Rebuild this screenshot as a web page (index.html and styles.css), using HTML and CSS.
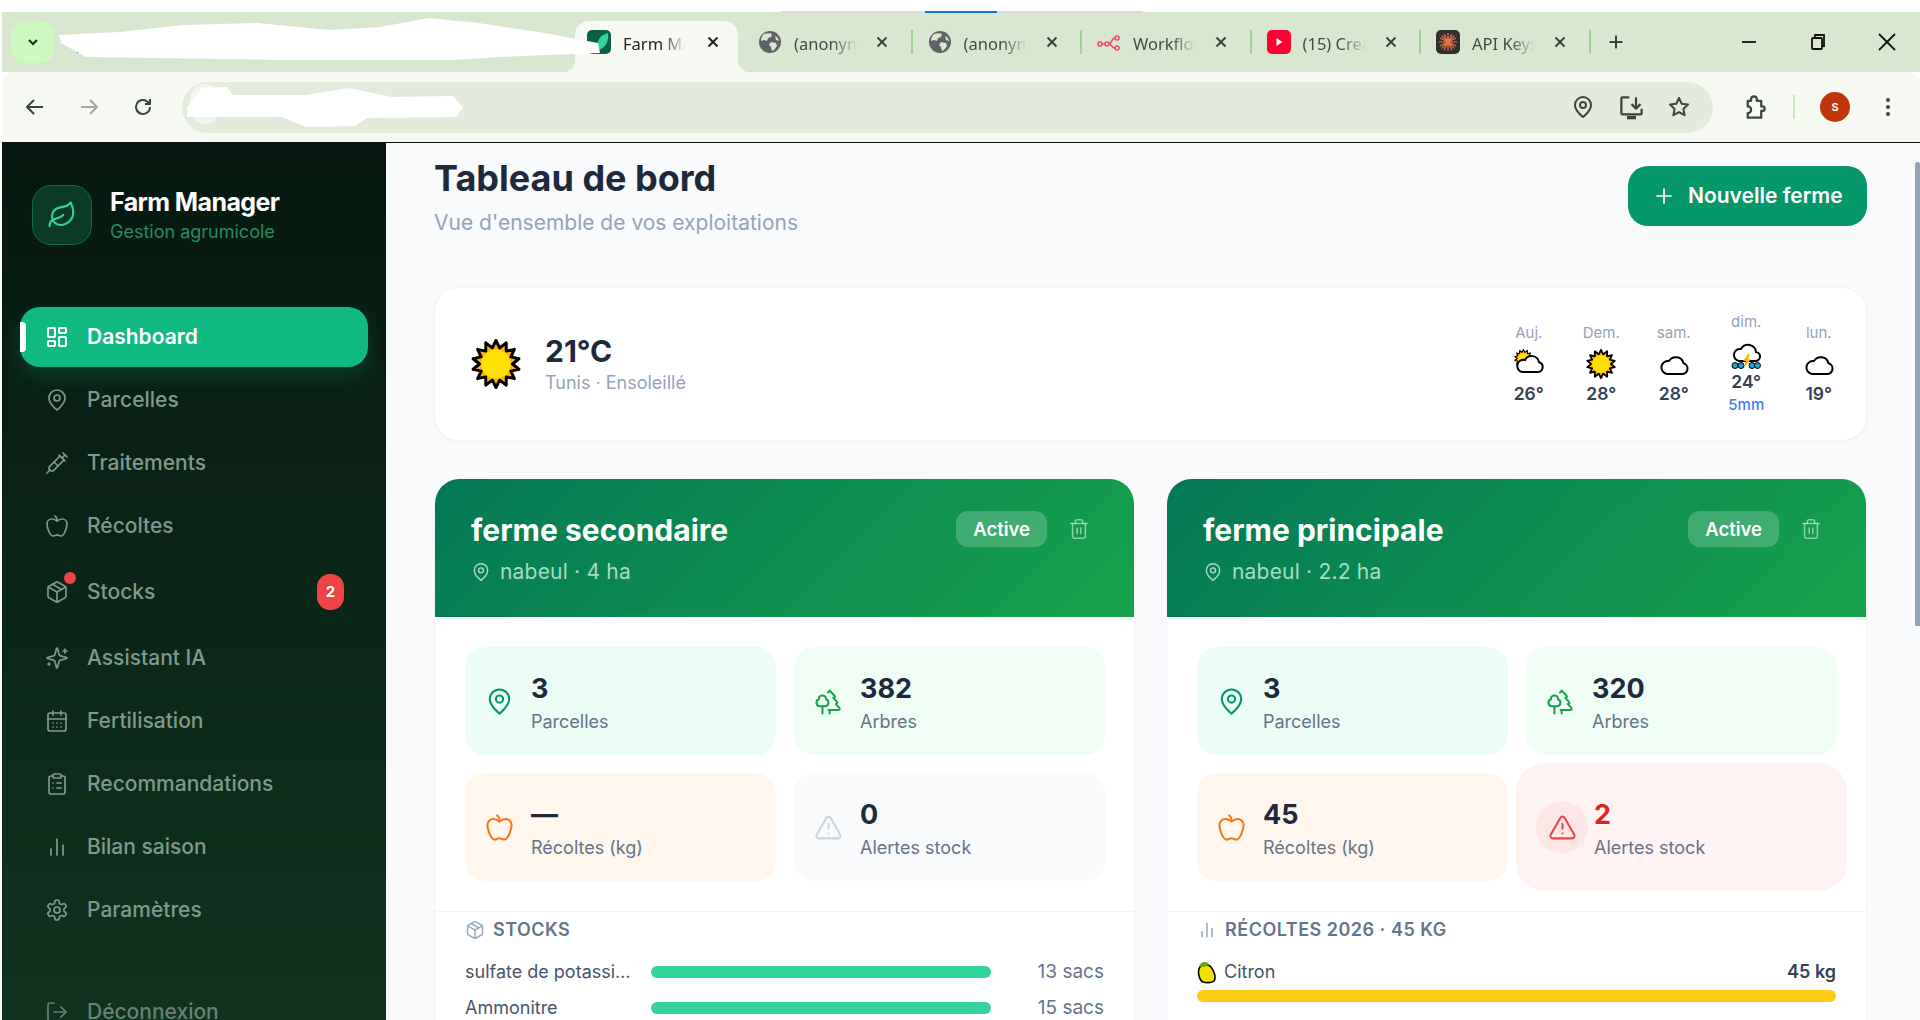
FILE: index.html
```html
<!DOCTYPE html>
<html lang="fr">
<head>
  <meta charset="UTF-8">
  <meta name="viewport" content="width=device-width, initial-scale=1.0">
  <title>Farm Manager</title>
  <link rel="stylesheet" href="styles.css">
</head>
<body>

  <!-- shared icons -->
  <svg class="defs" width="0" height="0">
    <symbol id="i-dashboard" viewBox="0 0 24 24"><rect x="3" y="3" width="7" height="9" rx="1"/><rect x="14" y="3" width="7" height="5" rx="1"/><rect x="14" y="12" width="7" height="9" rx="1"/><rect x="3" y="16" width="7" height="5" rx="1"/></symbol>
    <symbol id="i-pin" viewBox="0 0 24 24"><path d="M20 10c0 6-8 12-8 12s-8-6-8-12a8 8 0 0 1 16 0Z"/><circle cx="12" cy="10" r="3"/></symbol>
    <symbol id="i-syringe" viewBox="0 0 24 24"><path d="m18 2 4 4"/><path d="m17 7 3-3"/><path d="M19 9 8.7 19.3c-1 1-2.5 1-3.4 0l-.6-.6c-1-1-1-2.5 0-3.4L15 5"/><path d="m9 11 4 4"/><path d="m5 19-3 3"/><path d="m14 4 6 6"/></symbol>
    <symbol id="i-apple" viewBox="0 0 24 24"><path d="M12 20.94c1.5 0 2.75 1.06 4 1.06 3 0 6-8 6-12.22A4.91 4.91 0 0 0 17 5c-2.22 0-4 1.44-5 2-1-.56-2.78-2-5-2a4.9 4.9 0 0 0-5 4.78C2 14 5 22 8 22c1.25 0 2.5-1.06 4-1.06Z"/><path d="M10 2c1 .5 2 2 2 5"/></symbol>
    <symbol id="i-package" viewBox="0 0 24 24"><path d="m7.5 4.27 9 5.15"/><path d="M21 8a2 2 0 0 0-1-1.73l-7-4a2 2 0 0 0-2 0l-7 4A2 2 0 0 0 3 8v8a2 2 0 0 0 1 1.73l7 4a2 2 0 0 0 2 0l7-4A2 2 0 0 0 21 16Z"/><path d="m3.3 7 8.7 5 8.7-5"/><path d="M12 22V12"/></symbol>
    <symbol id="i-sparkles" viewBox="0 0 24 24"><path d="M9.937 15.5A2 2 0 0 0 8.5 14.063l-6.135-1.582a.5.5 0 0 1 0-.962L8.5 9.936A2 2 0 0 0 9.937 8.5l1.582-6.135a.5.5 0 0 1 .963 0L14.063 8.5A2 2 0 0 0 15.5 9.937l6.135 1.581a.5.5 0 0 1 0 .964L15.5 14.063a2 2 0 0 0-1.437 1.437l-1.582 6.135a.5.5 0 0 1-.963 0z"/><path d="M20 3v4"/><path d="M22 5h-4"/><path d="M4 17v2"/><path d="M5 18H3"/></symbol>
    <symbol id="i-calendar" viewBox="0 0 24 24"><path d="M8 2v4"/><path d="M16 2v4"/><rect x="3" y="4" width="18" height="18" rx="2"/><path d="M3 10h18"/><path d="M8 14h.01"/><path d="M12 14h.01"/><path d="M16 14h.01"/><path d="M8 18h.01"/><path d="M12 18h.01"/><path d="M16 18h.01"/></symbol>
    <symbol id="i-clipboard" viewBox="0 0 24 24"><rect x="8" y="2" width="8" height="4" rx="1"/><path d="M16 4h2a2 2 0 0 1 2 2v14a2 2 0 0 1-2 2H6a2 2 0 0 1-2-2V6a2 2 0 0 1 2-2h2"/><path d="M12 11h4"/><path d="M12 16h4"/><path d="M8 11h.01"/><path d="M8 16h.01"/></symbol>
    <symbol id="i-bars" viewBox="0 0 24 24"><path d="M18 20V10"/><path d="M12 20V4"/><path d="M6 20v-6"/></symbol>
    <symbol id="i-settings" viewBox="0 0 24 24"><path d="M12.22 2h-.44a2 2 0 0 0-2 2v.18a2 2 0 0 1-1 1.73l-.43.25a2 2 0 0 1-2 0l-.15-.08a2 2 0 0 0-2.73.73l-.22.38a2 2 0 0 0 .73 2.73l.15.1a2 2 0 0 1 1 1.72v.51a2 2 0 0 1-1 1.74l-.15.09a2 2 0 0 0-.73 2.73l.22.38a2 2 0 0 0 2.73.73l.15-.08a2 2 0 0 1 2 0l.43.25a2 2 0 0 1 1 1.73V20a2 2 0 0 0 2 2h.44a2 2 0 0 0 2-2v-.18a2 2 0 0 1 1-1.73l.43-.25a2 2 0 0 1 2 0l.15.08a2 2 0 0 0 2.73-.73l.22-.39a2 2 0 0 0-.73-2.73l-.15-.08a2 2 0 0 1-1-1.74v-.5a2 2 0 0 1 1-1.74l.15-.09a2 2 0 0 0 .73-2.73l-.22-.38a2 2 0 0 0-2.73-.73l-.15.08a2 2 0 0 1-2 0l-.43-.25a2 2 0 0 1-1-1.73V4a2 2 0 0 0-2-2z"/><circle cx="12" cy="12" r="3"/></symbol>
    <symbol id="i-logout" viewBox="0 0 24 24"><path d="M9 21H5a2 2 0 0 1-2-2V5a2 2 0 0 1 2-2h4"/><path d="m16 17 5-5-5-5"/><path d="M21 12H9"/></symbol>
    <symbol id="i-leaf" viewBox="0 0 24 24"><path d="M11 20A7 7 0 0 1 9.8 6.1C15.5 5 17 4.48 19 2c1 2 2 4.18 2 8 0 5.5-4.78 10-10 10Z"/><path d="M2 21c0-3 1.85-5.36 5.08-6C9.5 14.52 12 13 13 12"/></symbol>
    <symbol id="i-trees" viewBox="0 0 24 24"><path d="M10 10v.2A3 3 0 0 1 8.9 16H5a3 3 0 0 1-1-5.8V10a3 3 0 0 1 6 0Z"/><path d="M7 16v6"/><path d="M13 19v3"/><path d="M12 19h8.3a1 1 0 0 0 .7-1.7L18 14h.3a1 1 0 0 0 .7-1.7L16 9h.2a1 1 0 0 0 .8-1.7L13 3l-1.4 1.5"/></symbol>
    <symbol id="i-alert" viewBox="0 0 24 24"><path d="m21.73 18-8-14a2 2 0 0 0-3.48 0l-8 14A2 2 0 0 0 4 21h16a2 2 0 0 0 1.73-3"/><path d="M12 9v4"/><path d="M12 17h.01"/></symbol>
    <symbol id="i-trash" viewBox="0 0 24 24"><path d="M3 6h18"/><path d="M19 6v14c0 1-1 2-2 2H7c-1 0-2-1-2-2V6"/><path d="M8 6V4c0-1 1-2 2-2h4c1 0 2 1 2 2v2"/><path d="M10 11v6"/><path d="M14 11v6"/></symbol>
    <symbol id="i-plus" viewBox="0 0 24 24"><path d="M5 12h14"/><path d="M12 5v14"/></symbol>
    <symbol id="i-close" viewBox="0 0 24 24"><path d="M6 6l12 12"/><path d="M18 6 6 18"/></symbol>
    <symbol id="i-globe" viewBox="0 0 24 24"><circle cx="12" cy="12" r="11" fill="#5f6368"/><path d="M6 4c3-1 6-1 8 0l-1 3-3 1-1 3-3-1-3 1c0-3 1-5 3-7zM13 12l5 1 1 3-3 4-2 1-1-4-2-2zM17 6l3 2 1 3-3-1z" fill="#d9e7d0"/></symbol>
    <symbol id="w-sun" viewBox="0 0 50 50"><polygon points="25,1.5 28.67,8.91 35.2,3.83 35.29,12.1 43.37,10.35 39.87,17.84 47.91,19.77 41.5,25 47.91,30.23 39.87,32.16 43.37,39.65 35.29,37.9 35.2,46.17 28.67,41.09 25,48.5 21.33,41.09 14.8,46.17 14.71,37.9 6.63,39.65 10.13,32.16 2.09,30.23 8.5,25 2.09,19.77 10.13,17.84 6.63,10.35 14.71,12.1 14.8,3.83 21.33,8.91" fill="#ffb300" stroke="#000" stroke-width="3" stroke-linejoin="round"/><circle cx="25" cy="25" r="14.5" fill="#ffe000"/></symbol>
    <symbol id="w-cloud" viewBox="0 0 30 30"><path d="M8 25H23a5.5 5.5 0 0 0 1.5-10.8A8 8 0 0 0 10 12a6.5 6.5 0 0 0-2 13z" fill="#fff" stroke="#000" stroke-width="2" stroke-linejoin="round"/></symbol>
  </svg>

  <div class="window">

    <!-- Browser chrome -->
    <div class="tabbar">
      <div class="tab-search">
        <svg width="16" height="16" viewBox="0 0 24 24" fill="none" stroke="#1f2a1c" stroke-width="3"><path d="m6 9 6 6 6-6"/></svg>
      </div>
      <div class="tabs">
        <div class="tab active">
          <svg class="favicon" viewBox="0 0 24 24"><rect width="24" height="24" rx="5" fill="#0b5f47"/><path d="M12 20C8 10 14 5 21 3c1 8-2 14-9 17z" fill="#34d399"/></svg>
          <span class="tab-title">Farm Manager</span>
          <svg class="tab-close" viewBox="0 0 24 24"><use href="#i-close"/></svg>
        </div>
        <div class="tab">
          <svg class="favicon" viewBox="0 0 24 24"><use href="#i-globe"/></svg>
          <span class="tab-title">(anonymous)</span>
          <svg class="tab-close" viewBox="0 0 24 24"><use href="#i-close"/></svg>
        </div>
        <div class="tab">
          <svg class="favicon" viewBox="0 0 24 24"><use href="#i-globe"/></svg>
          <span class="tab-title">(anonymous)</span>
          <svg class="tab-close" viewBox="0 0 24 24"><use href="#i-close"/></svg>
        </div>
        <div class="tab">
          <svg class="favicon" viewBox="0 0 24 24" fill="none" stroke="#ea4b71" stroke-width="1.6"><circle cx="3" cy="14" r="2"/><circle cx="10" cy="14" r="2"/><circle cx="20" cy="8" r="2"/><circle cx="20" cy="18" r="2"/><path d="M5 14h3M12 14c3 0 2-6 6-6M12 14c3 0 2 4 6 4"/></svg>
          <span class="tab-title">Workflow</span>
          <svg class="tab-close" viewBox="0 0 24 24"><use href="#i-close"/></svg>
        </div>
        <div class="tab">
          <svg class="favicon" viewBox="0 0 24 24"><rect width="24" height="24" rx="5" fill="#ff0033"/><path d="M9.5 8v8l6-4z" fill="#fff"/></svg>
          <span class="tab-title">(15) Creator</span>
          <svg class="tab-close" viewBox="0 0 24 24"><use href="#i-close"/></svg>
        </div>
        <div class="tab">
          <svg class="favicon" viewBox="0 0 24 24"><rect width="24" height="24" rx="5" fill="#33312f"/><path d="M12 3v18M3 12h18M5.6 5.6l12.8 12.8M18.4 5.6 5.6 18.4M8 4l8 16M16 4 8 20M4 8l16 8M20 8 4 16" stroke="#e8734a" stroke-width="1.2"/></svg>
          <span class="tab-title">API Keys</span>
          <svg class="tab-close" viewBox="0 0 24 24"><use href="#i-close"/></svg>
        </div>
      </div>
      <svg class="new-tab" viewBox="0 0 24 24"><use href="#i-plus"/></svg>
      <div class="win-controls">
        <svg viewBox="0 0 24 24"><path d="M5 12h14"/></svg>
        <svg viewBox="0 0 24 24"><rect x="6" y="8" width="10" height="11" rx="1"/><path d="M9 8V5h9v11h-2"/></svg>
        <svg viewBox="0 0 24 24"><path d="M4 4l16 16"/><path d="M20 4 4 20"/></svg>
      </div>
    </div>

    <div class="toolbar">
      <svg class="tool" viewBox="0 0 24 24"><path d="M20 12H5"/><path d="m11 5-7 7 7 7"/></svg>
      <svg class="tool tool-off" viewBox="0 0 24 24"><path d="M4 12h15"/><path d="m13 5 7 7-7 7"/></svg>
      <svg class="tool" viewBox="0 0 24 24"><path d="M19 12a7 7 0 1 1-2.2-5.1L19 9"/><path d="M19 4v5h-5"/></svg>
      <div class="omnibox">
        <svg class="tool" viewBox="0 0 24 24"><use href="#i-pin"/></svg>
        <svg class="tool tool-install" viewBox="0 0 24 24"><path d="M10 3H4a1 1 0 0 0-1 1v13a1 1 0 0 0 1 1h16a1 1 0 0 0 1-1v-4"/><path d="M16 3v9"/><path d="m12 9 4 4 4-4"/><path d="M8 21h8" stroke-width="3"/></svg>
        <svg class="tool" viewBox="0 0 24 24"><path d="m12 3 2.7 5.8 6.3.8-4.6 4.3 1.2 6.3-5.6-3.1-5.6 3.1 1.2-6.3L3 9.6l6.3-.8z"/></svg>
      </div>
      <svg class="tool tool-ext" viewBox="0 0 24 24"><path d="M6 6h3V4.5a2.5 2.5 0 0 1 5 0V6h4v5h1a2 2 0 0 1 0 4h-1v6H6v-4a2.5 2.5 0 0 0 0-6z"/></svg>
      <span class="tool-sep"></span>
      <span class="avatar">S</span>
      <svg class="tool-dots" viewBox="0 0 24 24"><circle cx="12" cy="5" r="2"/><circle cx="12" cy="12" r="2"/><circle cx="12" cy="19" r="2"/></svg>
    </div>

    <!-- App -->
    <div class="app">
      <aside class="sidebar">
        <div class="brand">
          <div class="brand-logo"><svg class="icon"><use href="#i-leaf"/></svg></div>
          <div>
            <div class="brand-name">Farm Manager</div>
            <div class="brand-sub">Gestion agrumicole</div>
          </div>
        </div>

        <nav class="nav">
          <a class="nav-item active" href="#"><svg class="icon"><use href="#i-dashboard"/></svg>Dashboard</a>
          <a class="nav-item" href="#"><svg class="icon"><use href="#i-pin"/></svg>Parcelles</a>
          <a class="nav-item" href="#"><svg class="icon"><use href="#i-syringe"/></svg>Traitements</a>
          <a class="nav-item" href="#"><svg class="icon"><use href="#i-apple"/></svg>Récoltes</a>
          <a class="nav-item nav-stocks" href="#"><svg class="icon"><use href="#i-package"/></svg><span class="nav-dot"></span>Stocks<span class="nav-badge">2</span></a>
          <a class="nav-item" href="#"><svg class="icon"><use href="#i-sparkles"/></svg>Assistant IA</a>
          <a class="nav-item" href="#"><svg class="icon"><use href="#i-calendar"/></svg>Fertilisation</a>
          <a class="nav-item" href="#"><svg class="icon"><use href="#i-clipboard"/></svg>Recommandations</a>
          <a class="nav-item" href="#"><svg class="icon"><use href="#i-bars"/></svg>Bilan saison</a>
          <a class="nav-item" href="#"><svg class="icon"><use href="#i-settings"/></svg>Paramètres</a>
          <a class="nav-item nav-logout" href="#"><svg class="icon"><use href="#i-logout"/></svg>Déconnexion</a>
        </nav>
      </aside>

      <main class="main">
        <div class="page-head">
          <div>
            <h1>Tableau de bord</h1>
            <p>Vue d'ensemble de vos exploitations</p>
          </div>
          <button class="btn-new"><svg class="icon"><use href="#i-plus"/></svg>Nouvelle ferme</button>
        </div>

        <section class="weather">
          <svg class="weather-sun"><use href="#w-sun"/></svg>
          <div class="weather-now">
            <div class="weather-temp">21°C</div>
            <div class="weather-place">Tunis · Ensoleillé</div>
          </div>
          <div class="forecast">
            <div class="day">
              <span class="day-name">Auj.</span>
              <svg class="day-icon" viewBox="0 0 30 30">
                <use href="#w-sun" x="0" y="0" width="19" height="19"/>
                <path d="M8 23H24a5 5 0 0 0 1-9.8A7.5 7.5 0 0 0 11 11a6 6 0 0 0-3 12z" fill="#fff" stroke="#000" stroke-width="2"/>
              </svg>
              <span class="day-temp">26°</span>
            </div>
            <div class="day">
              <span class="day-name">Dem.</span>
              <svg class="day-icon"><use href="#w-sun"/></svg>
              <span class="day-temp">28°</span>
            </div>
            <div class="day">
              <span class="day-name">sam.</span>
              <svg class="day-icon"><use href="#w-cloud"/></svg>
              <span class="day-temp">28°</span>
            </div>
            <div class="day">
              <span class="day-name">dim.</span>
              <svg class="day-icon day-icon-short" viewBox="0 0 30 26">
                <path d="M8 18H24a4.5 4.5 0 0 0 1-9A8 8 0 0 0 10 6a6 6 0 0 0-2 12z" fill="#fff" stroke="#000" stroke-width="2"/>
                <circle cx="4" cy="22.5" r="3" fill="#1da1d8" stroke="#000"/>
                <circle cx="10" cy="22.5" r="3" fill="#1da1d8" stroke="#000"/>
                <circle cx="21" cy="22.5" r="3" fill="#1da1d8" stroke="#000"/>
                <circle cx="26.5" cy="22.5" r="3" fill="#1da1d8" stroke="#000"/>
                <path d="M17 11l-5 7h3l-2 7 7-9h-3l2-5z" fill="#ffb300"/>
              </svg>
              <span class="day-temp">24°</span>
              <span class="day-rain">5mm</span>
            </div>
            <div class="day">
              <span class="day-name">lun.</span>
              <svg class="day-icon"><use href="#w-cloud"/></svg>
              <span class="day-temp">19°</span>
            </div>
          </div>
        </section>

        <div class="farms">

          <article class="farm">
            <header class="farm-head">
              <div class="farm-info">
                <h2>ferme secondaire</h2>
                <div class="farm-loc"><svg class="icon"><use href="#i-pin"/></svg>nabeul · 4 ha</div>
              </div>
              <span class="chip">Active</span>
              <svg class="icon farm-trash"><use href="#i-trash"/></svg>
            </header>
            <div class="farm-body">
              <div class="stats">
                <div class="stat stat-green">
                  <div class="stat-icon c-emerald"><svg class="icon"><use href="#i-pin"/></svg></div>
                  <div class="stat-text"><div class="stat-value">3</div><div class="stat-label">Parcelles</div></div>
                </div>
                <div class="stat stat-lime">
                  <div class="stat-icon c-green"><svg class="icon"><use href="#i-trees"/></svg></div>
                  <div class="stat-text"><div class="stat-value">382</div><div class="stat-label">Arbres</div></div>
                </div>
                <div class="stat stat-orange">
                  <div class="stat-icon c-orange"><svg class="icon"><use href="#i-apple"/></svg></div>
                  <div class="stat-text"><div class="stat-value">—</div><div class="stat-label">Récoltes (kg)</div></div>
                </div>
                <div class="stat stat-grey">
                  <div class="stat-icon c-grey"><svg class="icon"><use href="#i-alert"/></svg></div>
                  <div class="stat-text"><div class="stat-value">0</div><div class="stat-label">Alertes stock</div></div>
                </div>
              </div>
            </div>
            <div class="farm-section">
              <div class="section-title"><svg class="icon"><use href="#i-package"/></svg>STOCKS</div>
              <div class="stock-row">
                <span class="stock-name">sulfate de potassium</span>
                <span class="bar"><span class="bar-fill"></span></span>
                <span class="stock-qty">13 sacs</span>
              </div>
              <div class="stock-row">
                <span class="stock-name">Ammonitre</span>
                <span class="bar"><span class="bar-fill"></span></span>
                <span class="stock-qty">15 sacs</span>
              </div>
            </div>
          </article>

          <article class="farm">
            <header class="farm-head">
              <div class="farm-info">
                <h2>ferme principale</h2>
                <div class="farm-loc"><svg class="icon"><use href="#i-pin"/></svg>nabeul · 2.2 ha</div>
              </div>
              <span class="chip">Active</span>
              <svg class="icon farm-trash"><use href="#i-trash"/></svg>
            </header>
            <div class="farm-body">
              <div class="stats">
                <div class="stat stat-green">
                  <div class="stat-icon c-emerald"><svg class="icon"><use href="#i-pin"/></svg></div>
                  <div class="stat-text"><div class="stat-value">3</div><div class="stat-label">Parcelles</div></div>
                </div>
                <div class="stat stat-lime">
                  <div class="stat-icon c-green"><svg class="icon"><use href="#i-trees"/></svg></div>
                  <div class="stat-text"><div class="stat-value">320</div><div class="stat-label">Arbres</div></div>
                </div>
                <div class="stat stat-orange">
                  <div class="stat-icon c-orange"><svg class="icon"><use href="#i-apple"/></svg></div>
                  <div class="stat-text"><div class="stat-value">45</div><div class="stat-label">Récoltes (kg)</div></div>
                </div>
                <div class="stat stat-alert">
                  <div class="stat-icon c-red"><svg class="icon"><use href="#i-alert"/></svg></div>
                  <div class="stat-text"><div class="stat-value">2</div><div class="stat-label">Alertes stock</div></div>
                </div>
              </div>
            </div>
            <div class="farm-section">
              <div class="section-title"><svg class="icon"><use href="#i-bars"/></svg>RÉCOLTES 2026 · 45 KG</div>
              <div class="harvest-row">
                <span class="harvest-name">
                  <svg class="lemon" viewBox="0 0 20 24"><path d="M3 7c3-3 9-3 11 0 4 5 5 11 3 14-2 2-8 2-11 1C2 20 0 11 3 7z" fill="#f5e000" stroke="#000" stroke-width="1.6"/><path d="M2 6c2-5 8-5 10-2-2 3-8 4-10 2z" fill="#6aa51e"/></svg>
                  Citron
                </span>
                <span class="harvest-qty">45 kg</span>
              </div>
              <span class="bar bar-harvest"><span class="bar-fill"></span></span>
            </div>
          </article>

        </div>

        <div class="scroll-thumb"></div>
      </main>
    </div>

    <!-- scribbled-out parts of the screenshot and the loading line -->
    <div class="load-line"></div>
    <svg class="scribble" width="620" height="135" viewBox="0 0 620 135">
      <rect x="190" y="84" width="30" height="40" rx="15" fill="#f1f5ec"/>
      <rect x="77" y="46" width="5" height="7" fill="#6a4fc9"/>
      <polygon points="59,35 120,32 184,25 257,23 330,30 380,27 429,18 478,23 545,33 598,43 600,53 520,56 453,60 288,60 86,57 61,43" fill="#fff"/>
      <polygon points="187,107 202,88 227,87 233,95 306,95 349,88 392,97 453,96 463,107 456,117 367,118 355,126 306,127 282,117 187,117" fill="#fff"/>
    </svg>

  </div>

</body>
</html>
```

FILE: styles.css
```css
* {
  margin: 0;
  padding: 0;
  box-sizing: border-box;
}

body {
  font-family: Inter, "Liberation Sans", sans-serif;
  background: white;
  height: 100vh;
  overflow: hidden;
}

.defs {
  position: absolute;
}

.icon {
  width: 24px;
  height: 24px;
  fill: none;
  stroke: currentColor;
  stroke-width: 1.7;
  stroke-linecap: round;
  stroke-linejoin: round;
  flex-shrink: 0;
}

.window {
  position: relative;
  height: 100%;
  padding: 12px 0 0 2px;
  display: flex;
  flex-direction: column;
}

/* browser chrome */

.tabbar {
  height: 60px;
  background: #d9e7d0;
  display: flex;
  align-items: flex-start;
  padding-top: 9px;
  padding-left: 9px;
  flex-shrink: 0;
}

.tab-search {
  width: 43px;
  height: 42px;
  border-radius: 14px;
  background: #cdfabe;
  display: flex;
  align-items: center;
  justify-content: center;
}

.tabs {
  display: flex;
  margin-left: 521px;
}

.tab {
  width: 169.5px;
  height: 42px;
  padding-left: 16px;
  display: flex;
  align-items: center;
  position: relative;
  font-family: "Noto Sans", sans-serif;
  font-size: 16.5px;
  color: #454a44;
}

.tab::after {
  content: "";
  position: absolute;
  right: -1px;
  top: 9px;
  height: 24px;
  width: 2px;
  background: #9dd28f;
}

.tab.active {
  width: 163px;
  margin-right: 4px;
  height: 51px;
  padding: 0 0 9px 12px;
  background: #f6f9f1;
  border-radius: 14px 14px 0 0;
  color: #20241f;
}

.tab.active::after {
  display: none;
}

.tab.active::before {
  content: "";
  position: absolute;
  left: -12px;
  bottom: 0;
  width: 12px;
  height: 12px;
  background: radial-gradient(circle at 0 0, transparent 12px, #f6f9f1 12.5px);
}

.tab.active + .tab::before {
  content: "";
  position: absolute;
  left: -4px;
  top: 39px;
  width: 12px;
  height: 12px;
  background: radial-gradient(circle at 100% 0, transparent 12px, #f6f9f1 12.5px);
}

.favicon {
  width: 24px;
  height: 24px;
  flex-shrink: 0;
}

.tab-title {
  width: 64px;
  margin-left: 12px;
  padding-top: 2px;
  white-space: nowrap;
  overflow: hidden;
  -webkit-mask-image: linear-gradient(90deg, #000 60%, transparent 98%);
  mask-image: linear-gradient(90deg, #000 60%, transparent 98%);
}

.tab-close {
  width: 18px;
  height: 18px;
  margin-left: 17px;
  fill: none;
  stroke: #20241f;
  stroke-width: 2.6;
}

.tab:not(.active) .tab-close {
  stroke: #3c4139;
  margin-left: 15px;
}

.new-tab {
  width: 22px;
  height: 22px;
  margin: 10px 0 0 15px;
  fill: none;
  stroke: #3c4139;
  stroke-width: 2.2;
}

.win-controls {
  display: flex;
  margin-left: auto;
  padding-top: 9px;
  padding-right: 21px;
  gap: 45px;
}

.win-controls svg {
  width: 24px;
  height: 24px;
  fill: none;
  stroke: #111;
  stroke-width: 1.8;
}

.toolbar {
  height: 71px;
  background: #f6f9f1;
  border-radius: 12px 12px 0 0;
  border-bottom: 1px solid #111;
  display: flex;
  align-items: center;
  padding: 0 17px 0 21px;
  flex-shrink: 0;
}

.tool {
  width: 24px;
  height: 24px;
  fill: none;
  stroke: #3c4539;
  stroke-width: 2;
  stroke-linejoin: round;
  flex-shrink: 0;
}

.toolbar > .tool {
  margin-right: 30px;
}

.toolbar > .tool-off {
  stroke: #a3a8a0;
}

.omnibox {
  margin-left: -3px;
  width: 1531px;
  height: 51px;
  border-radius: 26px;
  background: #e3ebdc;
  display: flex;
  align-items: center;
  justify-content: flex-end;
  gap: 22.5px;
  padding-right: 22px;
}

.tool-install {
  width: 27px;
  height: 27px;
}

.toolbar > .tool-ext {
  margin: 0 0 0 28px;
  width: 27px;
  height: 27px;
}

.tool-sep {
  width: 2px;
  height: 24px;
  margin-left: 25px;
  background: #c5ebb8;
}

.avatar {
  width: 30px;
  height: 30px;
  margin-left: 25px;
  border-radius: 50%;
  background: #bf360c;
  color: white;
  font-size: 11px;
  font-weight: 600;
  display: flex;
  align-items: center;
  justify-content: center;
}

.tool-dots {
  width: 24px;
  height: 24px;
  margin-left: 26px;
  fill: #3c4539;
}

/* app */

.app {
  flex: 1;
  display: flex;
  min-height: 0;
}

.sidebar {
  width: 384px;
  flex-shrink: 0;
  padding: 42px 18px 0;
  background: linear-gradient(180deg, #06180f 0%, #0f331f 100%);
  overflow: hidden;
}

.brand {
  display: flex;
  align-items: center;
  gap: 18px;
  padding-left: 12px;
}

.brand-logo {
  width: 60px;
  height: 60px;
  border-radius: 19px;
  background: #0b3a26;
  border: 1px solid #136b45;
  color: #34d399;
  display: flex;
  align-items: center;
  justify-content: center;
}

.brand-logo .icon {
  width: 30px;
  height: 30px;
}

.brand-name {
  color: white;
  font-size: 25px;
  font-weight: 700;
  letter-spacing: -0.6px;
  line-height: 32px;
}

.brand-sub {
  color: #2d8a5f;
  font-size: 18px;
  line-height: 26px;
  padding-top: 1px;
}

.nav {
  margin-top: 62px;
  display: flex;
  flex-direction: column;
  gap: 3px;
}

.nav-item {
  position: relative;
  height: 60px;
  display: flex;
  align-items: center;
  gap: 18px;
  padding: 0 24px 1px 25px;
  border-radius: 20px;
  font-size: 21px;
  font-weight: 500;
  color: #7f9a8c;
  text-decoration: none;
  flex-shrink: 0;
}

.nav-item.active {
  background: #10b981;
  color: white;
  font-weight: 600;
  box-shadow: 0 10px 25px rgba(16, 185, 129, 0.2);
}

.nav-item.active .icon {
  stroke-width: 2;
}

.nav-item.active::before {
  content: "";
  position: absolute;
  left: 0;
  top: 15px;
  width: 6px;
  height: 30px;
  background: white;
  border-radius: 0 4px 4px 0;
}

.nav-stocks {
  height: 66px;
}

.nav-dot {
  position: absolute;
  left: 44px;
  top: 13px;
  width: 12px;
  height: 12px;
  border-radius: 50%;
  background: #ef4444;
}

.nav-badge {
  margin-left: auto;
  width: 27px;
  height: 36px;
  border-radius: 13px;
  background: #ef4444;
  color: white;
  font-size: 15px;
  font-weight: 700;
  display: flex;
  align-items: center;
  justify-content: center;
}

.nav-logout {
  margin-top: 39px;
  color: #678274;
}

/* main */

.main {
  position: relative;
  flex: 1;
  min-width: 0;
  background: #f8fafc;
  padding: 13px 53px 0 48px;
  overflow: hidden;
}

.scroll-thumb {
  position: absolute;
  top: 19px;
  right: 0;
  width: 5px;
  height: 464px;
  background: #94a3b8;
  border-radius: 3px 3px 0 0;
}

.page-head {
  display: flex;
  justify-content: space-between;
  align-items: flex-start;
  margin-bottom: 50px;
}

.page-head h1 {
  font-size: 36px;
  font-weight: 700;
  line-height: 44px;
  color: #1e293b;
  margin-bottom: 9px;
}

.page-head p {
  font-size: 21px;
  line-height: 28px;
  color: #94a3b8;
}

.btn-new {
  width: 239px;
  height: 60px;
  margin-top: 10px;
  border: none;
  border-radius: 20px;
  background: #059669;
  color: white;
  font-family: inherit;
  font-size: 21px;
  font-weight: 600;
  display: flex;
  align-items: center;
  gap: 12px;
  padding: 0 0 1px 24px;
}

.weather {
  height: 154px;
  background: white;
  border: 1px solid #f1f5f9;
  border-radius: 25px;
  box-shadow: 0 1px 3px rgba(15, 23, 42, 0.04);
  display: flex;
  align-items: center;
  padding: 0 11px 0 36px;
  margin-bottom: 38px;
}

.weather-sun {
  width: 50px;
  height: 50px;
  flex-shrink: 0;
}

.weather-now {
  margin-left: 24px;
  padding-bottom: 1px;
}

.weather-temp {
  font-size: 30px;
  font-weight: 700;
  line-height: 38px;
  color: #1e293b;
}

.weather-place {
  font-size: 18px;
  line-height: 26px;
  color: #94a3b8;
}

.forecast {
  margin-left: auto;
  display: flex;
  align-items: center;
}

.day {
  width: 72.5px;
  display: flex;
  flex-direction: column;
  align-items: center;
}

.day-name {
  font-size: 15px;
  line-height: 22px;
  color: #94a3b8;
}

.day-icon {
  width: 30px;
  height: 30px;
  margin: 5px 0 2px;
}

.day-icon-short {
  height: 26px;
  margin: 10px 0 0;
}

.day-temp {
  font-size: 17.5px;
  font-weight: 600;
  line-height: 26px;
  color: #334155;
}

.day-rain {
  font-size: 15px;
  font-weight: 500;
  line-height: 20px;
  padding-bottom: 2px;
  color: #3b82f6;
}

.farms {
  display: grid;
  grid-template-columns: 1fr 1fr;
  gap: 31px;
}

.farm {
  background: white;
  border: 1px solid #f1f5f9;
  border-top: none;
  border-radius: 25px;
  overflow: hidden;
}

.farm-head {
  height: 138px;
  background: linear-gradient(135deg, #047857 0%, #16a34a 100%);
  display: flex;
  align-items: flex-start;
  padding: 32px 36px 0;
  color: white;
}

.farm-info {
  flex: 1;
  min-width: 0;
}

.farm-head h2 {
  font-size: 30px;
  font-weight: 700;
  line-height: 38px;
}

.farm-loc {
  margin-top: 9px;
  display: flex;
  align-items: center;
  gap: 9px;
  font-size: 21px;
  letter-spacing: 0.2px;
  line-height: 28px;
  color: #a7dcc0;
}

.farm-loc .icon {
  width: 20px;
  height: 20px;
}

.chip {
  height: 36px;
  padding: 0 17px;
  border-radius: 12px;
  background: rgba(255, 255, 255, 0.2);
  font-size: 18.5px;
  font-weight: 600;
  display: flex;
  align-items: center;
}

.farm-trash {
  width: 22px;
  height: 22px;
  margin: 7px 8px 0 21px;
  color: rgba(255, 255, 255, 0.5);
}

.farm-body {
  padding: 30px 30px 30px;
  border-bottom: 1px solid #f1f5f9;
}

.stats {
  display: grid;
  grid-template-columns: 310.5px 310.5px;
  column-gap: 18.5px;
  row-gap: 18px;
}

.stat {
  height: 108px;
  border-radius: 20px;
  display: flex;
  align-items: center;
  gap: 6px;
  padding: 0 8px;
}

.stat-green { background: #ecfdf5; }
.stat-lime { background: #f0fdf4; }
.stat-orange { background: #fff7ed; }
.stat-grey { background: #f8fafc; }

.stat-alert {
  background: #fef2f2;
  box-shadow: 0 0 0 10px #fef2f2;
  border-radius: 18px;
  gap: 6px;
  padding-left: 10px;
}

.stat-alert .stat-value {
  color: #dc2626;
}

.stat-icon {
  width: 52px;
  height: 52px;
  border-radius: 50%;
  flex-shrink: 0;
  display: flex;
  align-items: center;
  justify-content: center;
}

.stat-icon .icon {
  width: 29px;
  height: 29px;
}

.c-emerald { color: #059669; }
.c-green { color: #16a34a; }
.c-orange { color: #f97316; }
.c-grey { color: #cbd5e1; }
.c-red { color: #ef4444; background: #fde6e6; }

.stat-text {
  padding-top: 5px;
}

.stat-value {
  font-size: 27px;
  font-weight: 700;
  line-height: 34px;
  color: #1e293b;
}

.stat-label {
  font-size: 18px;
  line-height: 26px;
  margin-top: 3px;
  color: #64748b;
}

.farm-section {
  padding: 6px 30px 40px;
}

.section-title {
  display: flex;
  align-items: center;
  gap: 8px;
  font-size: 18px;
  font-weight: 600;
  line-height: 24px;
  letter-spacing: 0.5px;
  color: #64748b;
  margin-bottom: 18px;
}

.section-title .icon {
  width: 20px;
  height: 20px;
  color: #94a3b8;
}

.stock-row {
  display: grid;
  grid-template-columns: 168px 340px 95px;
  column-gap: 18px;
  align-items: center;
  height: 24px;
  margin-bottom: 12px;
  font-size: 18px;
}

.stock-name {
  color: #475569;
  white-space: nowrap;
  overflow: hidden;
  text-overflow: ellipsis;
  margin-top: -2px;
}

.stock-qty {
  font-size: 19px;
  color: #64748b;
  text-align: right;
  margin-top: -2px;
}

.bar {
  display: block;
  height: 12px;
  border-radius: 6px;
  overflow: hidden;
}

.bar-fill {
  display: block;
  height: 100%;
  background: #34d399;
}

.bar-harvest .bar-fill {
  background: #facc15;
}

.harvest-row {
  display: flex;
  justify-content: space-between;
  align-items: center;
  height: 24px;
  margin-bottom: 6px;
  font-size: 18px;
  line-height: 22px;
}

.harvest-name {
  display: flex;
  align-items: center;
  gap: 7px;
  color: #475569;
}

.lemon {
  width: 20px;
  height: 24px;
}

.harvest-qty {
  font-weight: 600;
  color: #334155;
}

/* overlays */

.load-line {
  position: absolute;
  top: 11px;
  left: 781px;
  width: 362px;
  height: 2px;
  background: linear-gradient(90deg, #dcdcdc 0 144px, #0b76dc 144px 216px, #dcdcdc 216px);
}

.scribble {
  position: absolute;
  top: 0;
  left: 0;
}
```
